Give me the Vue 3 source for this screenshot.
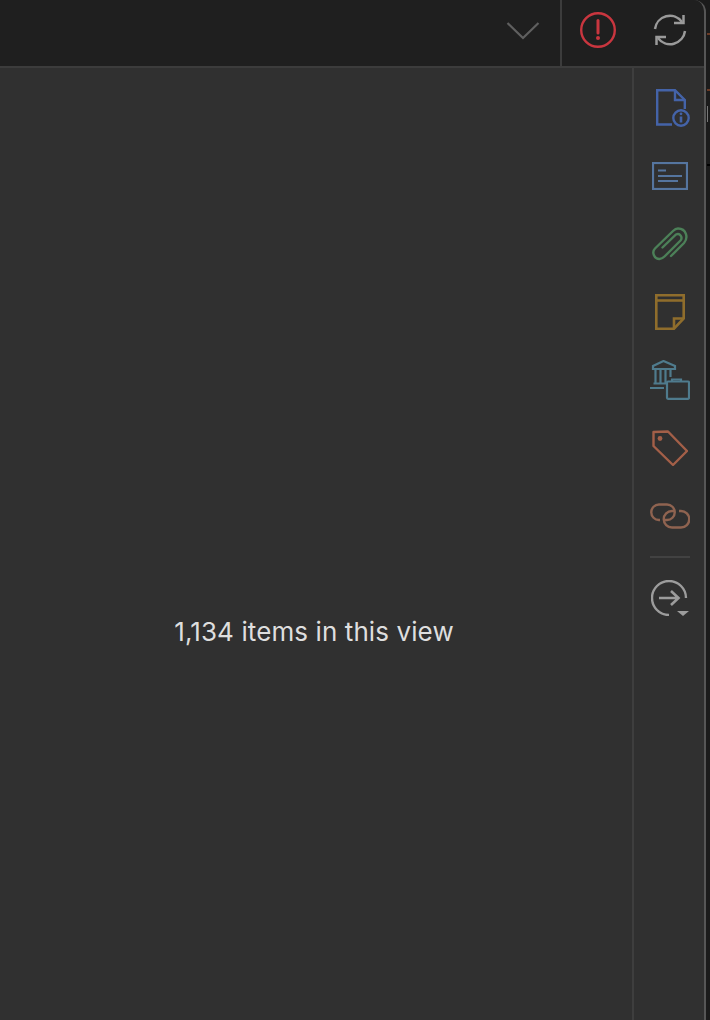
<template>
  <div class="desktop">
    <div class="window">
      <header class="topbar">
        <div class="spacer"></div>
        <button class="chevron">
          <svg viewBox="0 0 34 20" width="34" height="20" fill="none" stroke="#5f5f5f" stroke-width="2.200">
            <polyline points="1.500,2 17,17 32.500,2" />
          </svg>
        </button>
        <div class="actions">
          <svg viewBox="0 0 36 36" width="36" height="36" fill="none">
            <circle cx="18" cy="18" r="16.800" stroke="#c9363f" stroke-width="2.400" />
            <path d="M18 8.500V21" stroke="#c9363f" stroke-width="3" stroke-linecap="round" />
            <circle cx="18" cy="26" r="2" fill="#c9363f" />
          </svg>
          <svg viewBox="0 0 34 34" width="34" height="34" fill="none" stroke="#9a9a9a" stroke-width="2.500">
            <path d="M2 16A15 15 0 0 1 29 9" />
            <path d="M30.500 2V10H21" />
            <path d="M32 18A15 15 0 0 1 5 25" />
            <path d="M3.500 32V24H13" />
          </svg>
        </div>
      </header>
      <div class="body">
        <main class="content">
          <p class="count">{{ count }} items in this view</p>
        </main>
        <aside class="sidebar">
          <button class="tool">
            <svg viewBox="-6 0 40 38" width="40" height="38" fill="none" stroke="#4463a8" stroke-width="2.400">
              <path d="M16 35.500H1.200V1.200H19L28.800 11V20" />
              <path d="M19 1.200V11H28.800" />
              <circle cx="25" cy="29" r="7.700" />
              <path d="M25 27.500V33.500" stroke-width="2.600" />
              <circle cx="25" cy="24.800" r="1.400" fill="#4463a8" stroke="none" />
            </svg>
          </button>
          <button class="tool">
            <svg viewBox="0 0 36 28" width="36" height="28" fill="none" stroke="#55759f" stroke-width="2.200">
              <rect x="1" y="1" width="34" height="26" />
              <path d="M6 8.500H14M6 14H30M6 19H26" />
            </svg>
          </button>
          <button class="tool">
            <svg viewBox="0 0 36 34" width="36" height="34" fill="none" stroke="#4c8058" stroke-width="2.400" stroke-linecap="round">
              <path d="M19 29L32 16C36.500 11 34.500 1.500 26 1.500C24 1.500 22.500 2.500 21 4L3 21.500C-0.500 25 2 32 7.500 32C9.500 32 11 31 12.500 29.500L28.500 13.500C31 10.500 28 5.500 24 7.500L10.500 20.500" />
            </svg>
          </button>
          <button class="tool">
            <svg viewBox="0 0 30 36" width="30" height="36" fill="none" stroke="#8f6d2c" stroke-width="2.600">
              <path d="M19 34.700H1.300V1.300H28.700V24.500Z" />
              <path d="M1.300 6.500H28.700" />
              <path d="M19 34.700V24.500H28.700" />
            </svg>
          </button>
          <button class="tool">
            <svg viewBox="0 0 40 40" width="40" height="40" fill="none" stroke="#4f7b8d" stroke-width="2.200">
              <path d="M3 9V6L13.500 1L25 6V9Z" />
              <path d="M5.500 9V23M10.500 9V23M15.500 9V23M20.500 9V17" />
              <path d="M3.500 23.500H16M0 28H14" />
              <rect x="17" y="21.500" width="22" height="17.300" rx="1" />
              <path d="M22 21.500V19.500H31V21.500" />
            </svg>
          </button>
          <button class="tool">
            <svg viewBox="0 0 36 36" width="36" height="36" fill="none" stroke="#a35f48" stroke-width="2.400">
              <path d="M1.500 2V16L21 35L35 21L16 1.500Z" stroke-linejoin="round" />
              <circle cx="8" cy="8.500" r="2.400" fill="#a35f48" stroke="none" />
            </svg>
          </button>
          <button class="tool">
            <svg viewBox="0 0 40 26" width="40" height="26" fill="none" stroke="#8f6350" stroke-width="2.400">
              <path d="M10 17H9A7.750 7.750 0 0 1 9 1.500H17A7.750 7.750 0 0 1 17 17H15" />
              <path d="M29 8H31A8.250 8.250 0 0 1 31 24.500H22A8.250 8.250 0 0 1 22 8H24" />
            </svg>
          </button>
          <div class="rule"></div>
          <button class="tool">
            <svg viewBox="0 0 38 36" width="38" height="36" fill="none" stroke="#9c9c9c" stroke-width="2.400">
              <path d="M35 18A17 17 0 1 0 18 35" />
              <path d="M8 18H27.500M20 11L27.500 18L20 25" stroke-width="2.600" />
              <path d="M26 31H38L32 36Z" fill="#9c9c9c" stroke="none" />
            </svg>
          </button>
        </aside>
      </div>
    </div>
    <!-- slivers of the window behind, at the right edge -->
    <i class="mark mark-top"></i>
    <i class="mark mark-mid"></i>
    <i class="mark mark-black"></i>
    <i class="mark mark-thumb"></i>
  </div>
</template>

<script setup>
const count = '1,134'
</script>

<style>
html, body { background: #1b1b1b; }
</style>

<style scoped>
.desktop {
  position: relative;
  width: 710px;
  height: 1020px;
  overflow: hidden;
  background: #1b1b1b;
}
.mark {
  position: absolute;
  left: 707px;
  width: 3px;
  height: 2px;
  background: #6b3a25;
}
.mark-top { top: 33px; }
.mark-mid { top: 89px; }
.mark-black { top: 164px; background: #000; }
.mark-thumb { top: 106px; width: 1px; height: 16px; background: #777; }
.window {
  width: 706px;
  height: 1020px;
  display: flex;
  flex-direction: column;
  overflow: hidden;
  background: #303030;
  border-right: 2px solid #565656;
  box-sizing: border-box;
  border-top-right-radius: 12px;
  font-family: Inter, "Liberation Sans", sans-serif;
}
.topbar {
  flex-shrink: 0;
  display: flex;
  align-items: center;
  padding-bottom: 6px;
  height: 60px;
  background: #1f1f1f;
  border-bottom: 2px solid #3c3c3c;
}
.spacer { flex: 1; }
.chevron {
  background: none;
  border: none;
  padding: 0;
  margin: 2px 20px 0 0;
  display: flex;
}
.actions {
  align-self: stretch;
  margin-bottom: -6px;
  width: 144px;
  border-left: 2px solid #3c3c3c;
  display: flex;
  align-items: center;
  gap: 37px;
  padding: 0 0 6px 18px;
  box-sizing: border-box;
}
.body {
  flex: 1;
  display: flex;
  min-height: 0;
}
.content {
  flex: 1;
  display: flex;
  justify-content: center;
  padding: 548px 4px 0 0;
}
.count {
  margin: 0;
  font-size: 26px;
  line-height: 32px;
  height: 32px;
  letter-spacing: 0.1px;
  color: #dedede;
}
.sidebar {
  width: 72px;
  flex-shrink: 0;
  border-left: 2px solid #3e3e3e;
  display: flex;
  flex-direction: column;
  align-items: center;
  padding: 6px 0 0 2px;
  box-sizing: border-box;
}
.tool {
  background: none;
  border: none;
  padding: 0;
  height: 68px;
  width: 100%;
  flex-shrink: 0;
  display: flex;
  align-items: center;
  justify-content: center;
}
.rule {
  width: 40px;
  height: 2px;
  margin: 6px 0;
  background: #424242;
  flex-shrink: 0;
}
</style>
